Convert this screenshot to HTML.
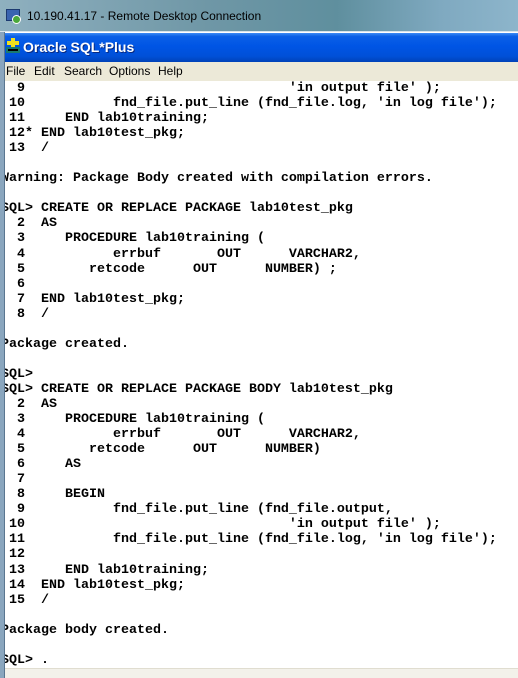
<!DOCTYPE html>
<html><head><style>
*{margin:0;padding:0;box-sizing:border-box}
body{width:518px;height:678px;overflow:hidden;background:#fff;position:relative;font-family:"Liberation Sans",sans-serif}
#rdp{position:absolute;left:0;top:0;width:518px;height:32px;background:linear-gradient(90deg,#8fb0bf 0%,#6f97a6 40%,#5f8f9e 65%,#7fa9c0 85%,#8db5cb 100%);border-bottom:1px solid #d8e4ea}
#rdp span{position:absolute;left:27px;top:9px;font-size:12px;color:#000}
#rdpicon{position:absolute;left:6px;top:9px;width:14px;height:12px;background:#3a64b0;border:1px solid #1c3a70}
#rdpicon2{position:absolute;left:12px;top:15px;width:9px;height:9px;border-radius:50%;background:#4aa83a;border:1px solid #fff}
#frame{position:absolute;left:0;top:32px;width:5px;height:646px;background:#8aa6be;border-right:1px solid #5a7690}
#title{position:absolute;left:5px;top:33px;width:513px;height:29px;background:linear-gradient(180deg,#3d8cf5 0%,#0a5fe6 12%,#0055e5 45%,#0050d8 80%,#0042b8 100%)}
#title span{position:absolute;left:18px;top:6px;font-size:14px;font-weight:bold;color:#fff;text-shadow:1px 1px 0 #0a2a80}
#oicon{position:absolute;left:1px;top:5px;width:14px;height:16px}
#menu{position:absolute;left:5px;top:62px;width:513px;height:19px;background:#ece9d8;font-size:12px}
#menu span{position:absolute;top:2px}
pre{position:absolute;left:1px;top:81px;font-family:"Liberation Mono",monospace;font-weight:bold;font-size:13.33px;line-height:15.05px;color:#000;letter-spacing:0}
#status{position:absolute;left:5px;top:668px;width:513px;height:10px;background:#f3f1ea;border-top:1px solid #e0ddd0}
</style></head><body>
<pre>  9                                 'in output file' );
 10           fnd_file.put_line (fnd_file.log, 'in log file');
 11     END lab10training;
 12* END lab10test_pkg;
 13  /

Warning: Package Body created with compilation errors.

SQL> CREATE OR REPLACE PACKAGE lab10test_pkg
  2  AS
  3     PROCEDURE lab10training (
  4           errbuf       OUT      VARCHAR2,
  5        retcode      OUT      NUMBER) ;
  6
  7  END lab10test_pkg;
  8  /

Package created.

SQL>
SQL> CREATE OR REPLACE PACKAGE BODY lab10test_pkg
  2  AS
  3     PROCEDURE lab10training (
  4           errbuf       OUT      VARCHAR2,
  5        retcode      OUT      NUMBER)
  6     AS
  7
  8     BEGIN
  9           fnd_file.put_line (fnd_file.output,
 10                                 'in output file' );
 11           fnd_file.put_line (fnd_file.log, 'in log file');
 12
 13     END lab10training;
 14  END lab10test_pkg;
 15  /

Package body created.

SQL> .</pre>
<div id="rdp"><div id="rdpicon"></div><div id="rdpicon2"></div><span>10.190.41.17 - Remote Desktop Connection</span></div>
<div id="frame"></div>
<div id="title"><svg id="oicon" viewBox="0 0 14 16"><rect x="5" y="0" width="4" height="10" fill="#f0e020"/><rect x="1" y="3" width="12" height="4" fill="#f0e020"/><rect x="0" y="9" width="14" height="6" fill="#1a7a70"/><rect x="2" y="11" width="10" height="2" fill="#000"/></svg><span>Oracle SQL*Plus</span></div>
<div id="menu"><span style="left:1px">File</span><span style="left:29px">Edit</span><span style="left:59px">Search</span><span style="left:104px">Options</span><span style="left:153px">Help</span></div>
<div id="status"></div>
</body></html>
